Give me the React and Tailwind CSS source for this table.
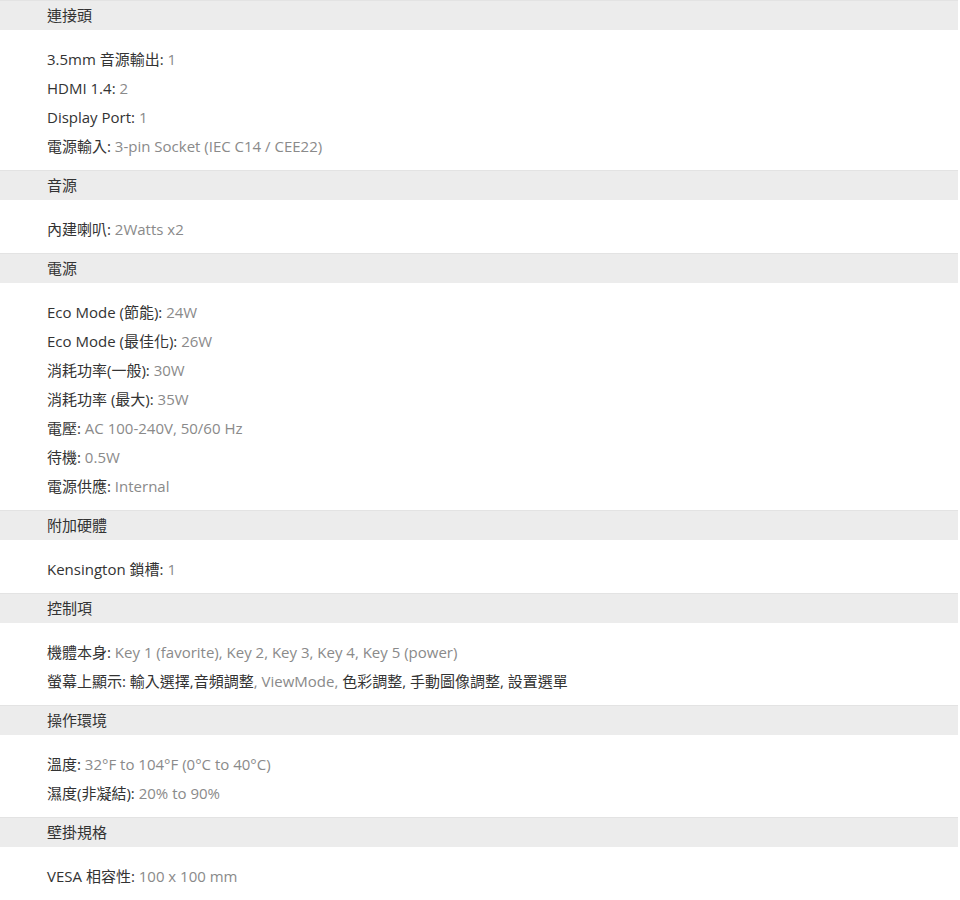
const specs = [
  {
    title: "連接頭",
    rows: [
      ["3.5mm 音源輸出", "1"],
      ["HDMI 1.4", "2"],
      ["Display Port", "1"],
      ["電源輸入", "3-pin Socket (IEC C14 / CEE22)"],
    ],
  },
  { title: "音源", rows: [["內建喇叭", "2Watts x2"]] },
  {
    title: "電源",
    rows: [
      ["Eco Mode (節能)", "24W"],
      ["Eco Mode (最佳化)", "26W"],
      ["消耗功率(一般)", "30W"],
      ["消耗功率 (最大)", "35W"],
      ["電壓", "AC 100-240V, 50/60 Hz"],
      ["待機", "0.5W"],
      ["電源供應", "Internal"],
    ],
  },
  { title: "附加硬體", rows: [["Kensington 鎖槽", "1"]] },
  {
    title: "控制項",
    rows: [
      ["機體本身", "Key 1 (favorite), Key 2, Key 3, Key 4, Key 5 (power)"],
      ["螢幕上顯示", "osd"],
    ],
  },
  {
    title: "操作環境",
    rows: [
      ["溫度", "32°F to 104°F (0°C to 40°C)"],
      ["濕度(非凝結)", "20% to 90%"],
    ],
  },
  { title: "壁掛規格", rows: [["VESA 相容性", "100 x 100 mm"]] },
];

function Value({ text }) {
  if (text === "osd") {
    // mixed colours in the reference: CJK words dark, ViewMode gray
    return (
      <span>
        <span className="text-[#333]">輸入選擇,音頻調整</span>
        <span className="text-[#8a8a8a]">, ViewMode, </span>
        <span className="text-[#333]">色彩調整, 手動圖像調整, 設置選單</span>
      </span>
    );
  }
  return <span className="text-[#8a8a8a]">{text}</span>;
}

export default function App() {
  return (
    <div
      className="bg-white w-[960px] text-[15px] text-[#333]"
      style={{ fontFamily: '"Open Sans", "Noto Sans CJK TC", sans-serif' }}
    >
      {specs.map((s) => (
        <div key={s.title}>
          <div className="h-[30px] border-t border-[#e3e3e3] bg-[#ececec] mr-[2px] pl-[47px] flex items-center">
            {s.title}
          </div>
          <div className="pt-[15px] pb-[9px] pl-[47px]">
            {s.rows.map(([label, value]) => (
              <div key={label} className="h-[29px] flex items-center whitespace-pre">
                <span>{label}: </span>
                <Value text={value} />
              </div>
            ))}
          </div>
        </div>
      ))}
    </div>
  );
}
